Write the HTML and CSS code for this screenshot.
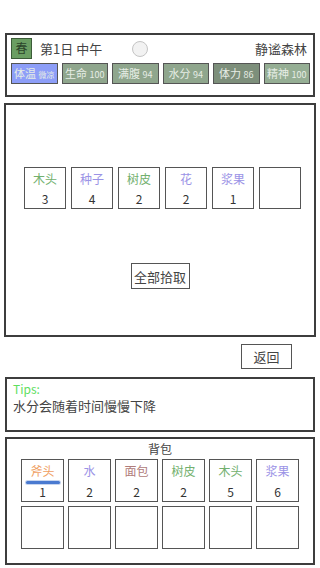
FILE: index.html
```html
<!DOCTYPE html>
<html lang="zh">
<head>
    <meta charset="UTF-8">
    <title>静谧森林</title>
    <link rel="stylesheet" href="styles.css">
</head>
<body>
    <div class="page">
        <div class="panel status">
            <div class="status-top">
                <div class="season">春</div>
                <div class="day">第1日 中午</div>
                <div class="sun"></div>
                <div class="place">静谧森林</div>
            </div>
            <div class="stats">
                <div class="stat stat-temp">体温 <small>微凉</small></div>
                <div class="stat">生命 <small>100</small></div>
                <div class="stat">满腹 <small>94</small></div>
                <div class="stat">水分 <small>94</small></div>
                <div class="stat stat-dark">体力 <small>86</small></div>
                <div class="stat stat-light">精神 <small>100</small></div>
            </div>
        </div>

        <div class="panel ground">
            <div class="ground-items">
                <div class="cell"><span class="name green">木头</span><span class="num">3</span></div>
                <div class="cell"><span class="name purple">种子</span><span class="num">4</span></div>
                <div class="cell"><span class="name green">树皮</span><span class="num">2</span></div>
                <div class="cell"><span class="name purple">花</span><span class="num">2</span></div>
                <div class="cell"><span class="name purple">浆果</span><span class="num">1</span></div>
                <div class="cell"></div>
            </div>
            <button class="btn pick-all">全部拾取</button>
        </div>

        <div class="actions">
            <button class="btn back">返回</button>
        </div>

        <div class="panel tips">
            <div class="tips-title">Tips:</div>
            <div class="tips-text">水分会随着时间慢慢下降</div>
        </div>

        <div class="panel bag">
            <div class="bag-title">背包</div>
            <div class="bag-grid">
                <div class="cell"><span class="name orange">斧头</span><span class="bar"></span><span class="num">1</span></div>
                <div class="cell"><span class="name purple">水</span><span class="num">2</span></div>
                <div class="cell"><span class="name brown">面包</span><span class="num">2</span></div>
                <div class="cell"><span class="name green">树皮</span><span class="num">2</span></div>
                <div class="cell"><span class="name green">木头</span><span class="num">5</span></div>
                <div class="cell"><span class="name purple">浆果</span><span class="num">6</span></div>
                <div class="cell"></div>
                <div class="cell"></div>
                <div class="cell"></div>
                <div class="cell"></div>
                <div class="cell"></div>
                <div class="cell"></div>
            </div>
        </div>
    </div>
</body>
</html>
```

FILE: styles.css
```css
body {
    margin: 0;
    background: #fff;
    color: #444;
    font-family: "Noto Sans CJK SC", "Noto Sans", sans-serif;
}

.page {
    padding: 33px 5px 0;
}

.panel {
    border: 2px solid #3d3d3d;
    box-sizing: border-box;
}

/* status bar */
.status {
    height: 64px;
    padding: 3px 2px 0;
}

.status-top {
    display: flex;
    align-items: center;
    height: 21px;
    font-size: 13px;
}

.season {
    width: 21px;
    height: 21px;
    box-sizing: border-box;
    margin-left: 2px;
    background: #6a9e62;
    border: 1.5px solid #3c5c38;
    color: #2c452a;
    font-size: 12px;
    line-height: 18px;
    text-align: center;
}

.day {
    margin-left: 8px;
}

.sun {
    width: 16px;
    height: 16px;
    box-sizing: border-box;
    margin-left: 30px;
    border: 1px solid #c4c4c4;
    border-radius: 50%;
    background: #f2f2f2;
}

.place {
    margin-left: auto;
    margin-right: 4px;
}

.stats {
    display: grid;
    grid-template-columns: repeat(6, 1fr);
    gap: 4px;
    margin-top: 4px;
    padding: 0 1px 0 2px;
}

.stat {
    height: 21px;
    box-sizing: border-box;
    background: #8fa68d;
    border: 1.5px solid #555;
    color: #e6ede5;
    font-size: 11px;
    line-height: 18px;
    text-align: center;
    white-space: nowrap;
}

.stat small {
    font-size: 9px;
}

.stat-temp {
    background: #8d9ef8;
    text-align: left;
    padding-left: 2px;
}

.stat-temp small {
    font-size: 8px;
}

.stat-dark {
    background: #7d8f7b;
}

.stat-light {
    background: #95ae94;
}

/* item cells */
.cell {
    width: 42px;
    height: 42px;
    box-sizing: border-box;
    border: 1.5px solid #555;
    display: flex;
    flex-direction: column;
    align-items: center;
    font-size: 12px;
    line-height: 16px;
}

.cell .name {
    margin-top: 3px;
}

.cell .num {
    margin-top: auto;
    margin-bottom: 1px;
    color: #333;
}

.green { color: #72b06e; }
.purple { color: #9b93e6; }
.orange { color: #f0a062; }
.brown { color: #b07c7a; }

.bar {
    width: 34px;
    height: 4px;
    margin-top: 2px;
    border-radius: 2px;
    background: #4a7ad0;
    box-shadow: 0 0 0 1px #c8d6ef;
}

.btn {
    font-family: inherit;
    font-size: 13px;
    color: #444;
    background: #fff;
    border: 1.5px solid #555;
    border-radius: 0;
    padding: 0;
    cursor: pointer;
}

/* ground */
.ground {
    height: 234px;
    margin: 6px -1px 0;
    padding-top: 62px;
    display: flex;
    flex-direction: column;
    align-items: center;
}

.ground-items {
    display: flex;
    gap: 5px;
    align-self: flex-start;
    padding-left: 18px;
}

.pick-all {
    width: 59px;
    height: 26px;
    margin-top: 54px;
}

.actions {
    height: 40px;
    display: flex;
    justify-content: flex-end;
    padding-right: 23px;
}

.back {
    width: 51px;
    height: 25px;
    margin-top: 7px;
}

/* tips */
.tips {
    height: 55px;
    padding: 2px 6px;
}

.tips-title {
    color: #5fe05f;
    font-size: 12px;
    line-height: 16px;
}

.tips-text {
    font-size: 13px;
    line-height: 18px;
}

/* backpack */
.bag {
    height: 128px;
    margin-top: 5px;
    padding: 2px 0 0 14px;
}

.bag-title {
    font-size: 12px;
    line-height: 16px;
    text-align: center;
    padding-right: 14px;
}

.bag-grid {
    display: grid;
    grid-template-columns: repeat(6, 43px);
    gap: 4px 4px;
    margin-top: 2px;
}

.bag-grid .cell {
    width: 43px;
    height: 43px;
}
```
